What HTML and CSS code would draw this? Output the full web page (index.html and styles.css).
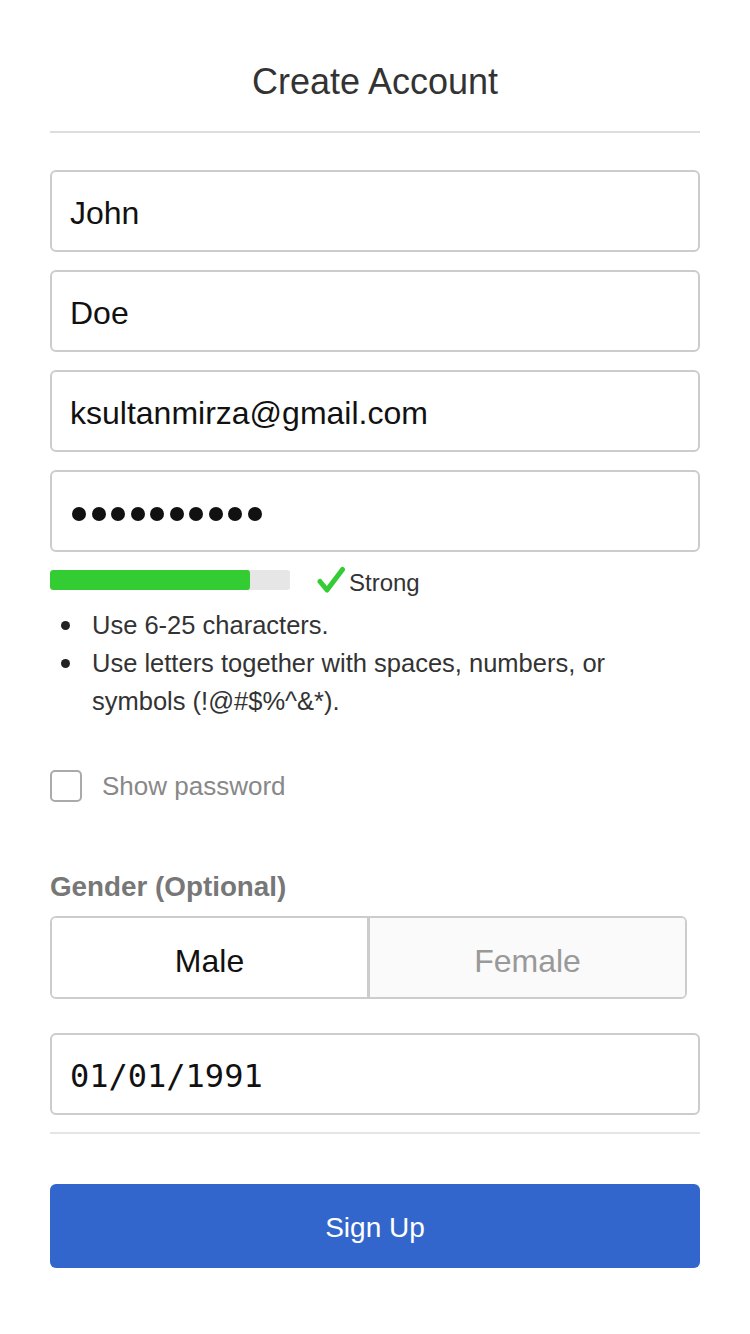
FILE: index.html
```html
<!DOCTYPE html>
<html lang="en">
<head>
<meta charset="utf-8">
<title>Create Account</title>
<link rel="stylesheet" href="styles.css">
</head>
<body>
<main class="page">
  <h1 class="title">Create Account</h1>
  <hr class="rule rule-top">

  <form class="form">
    <div class="field">John</div>
    <div class="field">Doe</div>
    <div class="field">ksultanmirza@gmail.com</div>
    <div class="field field-password" aria-label="password">
      <span class="dot"></span><span class="dot"></span><span class="dot"></span><span class="dot"></span><span class="dot"></span><span class="dot"></span><span class="dot"></span><span class="dot"></span><span class="dot"></span><span class="dot"></span>
    </div>

    <div class="strength">
      <div class="meter"><div class="meter-fill" style="width: 83.3%"></div></div>
      <svg class="check" width="30" height="28" viewBox="0 0 30 28" aria-hidden="true">
        <path d="M4 15.5 L11 24 L26.5 3.5" fill="none" stroke="#33cc33" stroke-width="5" stroke-linecap="round" stroke-linejoin="round"/>
      </svg>
      <span class="strength-text">Strong</span>
    </div>

    <ul class="rules">
      <li>Use 6-25 characters.</li>
      <li>Use letters together with spaces, numbers, or symbols (!@#$%^&amp;*).</li>
    </ul>

    <label class="show">
      <span class="box"></span>
      <span class="show-text">Show password</span>
    </label>

    <div class="gender-label">Gender (Optional)</div>
    <div class="segmented">
      <div class="seg seg-active">Male</div>
      <div class="seg seg-off">Female</div>
    </div>

    <div class="field field-date">01/01/1991</div>
    <hr class="rule rule-bottom">

    <button type="button" class="submit">Sign Up</button>
  </form>
</main>
</body>
</html>
```

FILE: styles.css
```css
* {
  box-sizing: border-box;
}

html, body {
  margin: 0;
  padding: 0;
  background: #ffffff;
}

body {
  font-family: "Liberation Sans", Arial, Helvetica, sans-serif;
  color: #111111;
}

.page {
  width: 750px;
  padding: 0 50px;
}

.title {
  margin: 60px 0 0;
  height: 44px;
  line-height: 44px;
  font-size: 36px;
  font-weight: normal;
  text-align: center;
  color: #333333;
}

.rule {
  border: 0;
  height: 2px;
  margin: 0;
  background: #dddddd;
}

.rule-top {
  margin-top: 27px;
}

.form {
  display: flex;
  flex-direction: column;
  margin-top: 37px;
}

.field {
  height: 82px;
  border: 2px solid #cccccc;
  border-radius: 6px;
  padding: 4px 18px 0;
  display: flex;
  align-items: center;
  font-size: 32px;
  color: #111111;
  margin-bottom: 18px;
}

.field-password {
  gap: 5.5px;
  padding-left: 20px;
  padding-top: 6px;
  margin-bottom: 0;
}

.dot {
  width: 14px;
  height: 14px;
  border-radius: 50%;
  background: #111111;
}

.strength {
  display: flex;
  align-items: flex-start;
  margin-top: 18px;
  height: 24px;
}

.meter {
  width: 240px;
  height: 20px;
  border-radius: 3px;
  background: #e6e6e6;
  overflow: hidden;
}

.meter-fill {
  height: 100%;
  background: #33cc33;
  border-radius: 3px;
}

.check {
  margin: -4px 0 0 26px;
}

.strength-text {
  margin-left: 3px;
  padding-top: 1px;
  font-size: 24px;
  line-height: 24px;
  color: #333333;
}

.rules {
  margin: 12px 0 0;
  padding: 0 0 0 42px;
  list-style: none;
  font-size: 25.5px;
  line-height: 38px;
  color: #333333;
}

.rules li {
  position: relative;
}

.rules li::before {
  content: "";
  position: absolute;
  left: -31px;
  top: 15px;
  width: 9px;
  height: 9px;
  border-radius: 50%;
  background: #222222;
}

.show {
  display: flex;
  align-items: center;
  margin-top: 50px;
  height: 32px;
}

.box {
  width: 32px;
  height: 32px;
  border: 2px solid #aaaaaa;
  border-radius: 5px;
  background: #ffffff;
}

.show-text {
  margin-left: 20px;
  font-size: 26px;
  color: #888888;
}

.gender-label {
  margin-top: 69px;
  line-height: 32px;
  font-size: 27.8px;
  font-weight: bold;
  color: #777777;
}

.segmented {
  display: flex;
  width: 637px;
  height: 83px;
  margin-top: 13px;
  border: 2px solid #cccccc;
  border-radius: 6px;
  overflow: hidden;
}

.seg {
  flex: 1;
  display: flex;
  align-items: center;
  justify-content: center;
  padding-top: 7px;
  font-size: 32px;
}

.seg-active {
  background: #ffffff;
  color: #111111;
  border-right: 3px solid #cccccc;
}

.seg-off {
  background: #fafafa;
  color: #999999;
}

.field-date {
  margin-top: 34px;
  margin-bottom: 0;
  font-family: "DejaVu Sans Mono", "Liberation Mono", monospace;
  font-size: 32px;
}

.rule-bottom {
  margin-top: 17px;
  background: #e5e5e5;
}

.submit {
  margin-top: 50px;
  height: 84px;
  width: 100%;
  border: 0;
  border-radius: 6px;
  padding: 4px 0 0;
  background: #3366cc;
  color: #ffffff;
  font-family: "Liberation Sans", Arial, Helvetica, sans-serif;
  font-size: 28px;
}
```
